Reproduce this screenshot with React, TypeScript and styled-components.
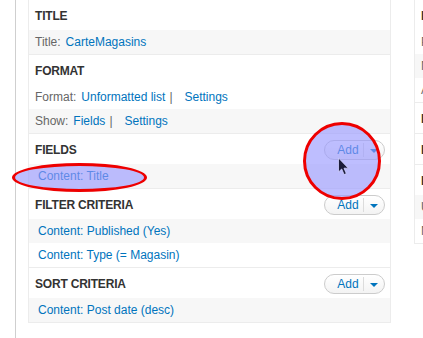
import React from "react";
import styled, {createGlobalStyle} from "styled-components";

const GlobalStyle = createGlobalStyle`
    html, body {
        margin: 0;
        padding: 0;
        background: #fff;
        font-family: "Liberation Sans", Arial, sans-serif;
        font-size: 12px;
        color: #333;
        overflow: hidden;
    }
`;

interface Row {
    label?: string;
    links: string[];
}

interface Section {
    title: string;
    add?: boolean;
    firstGray?: boolean;
    rows: Row[];
}

const mainSections: Section[] = [
    {title: 'Title', firstGray: true, rows: [{label: 'Title:', links: ['CarteMagasins']}]},
    {title: 'Format', firstGray: false, rows: [
        {label: 'Format:', links: ['Unformatted list', 'Settings']},
        {label: 'Show:', links: ['Fields', 'Settings']},
    ]},
    {title: 'Fields', add: true, firstGray: true, rows: [{links: ['Content: Title']}]},
    {title: 'Filter criteria', add: true, firstGray: true, rows: [
        {links: ['Content: Published (Yes)']},
        {links: ['Content: Type (= Magasin)']},
    ]},
    {title: 'Sort criteria', add: true, firstGray: true, rows: [{links: ['Content: Post date (desc)']}]},
];

const sideSections: Section[] = [
    {title: 'Page settings', firstGray: false, rows: [
        {label: 'Path:', links: ['/carte-magasins']},
        {label: 'Menu:', links: ['No menu']},
        {label: 'Access:', links: ['Permission']},
    ]},
    {title: 'Header', add: true, rows: []},
    {title: 'Footer', add: true, rows: []},
    {title: 'Pager', firstGray: true, rows: [
        {label: 'Use pager:', links: ['Display all items']},
        {label: 'More link:', links: ['No']},
    ]},
];

const AddButton = () => (
    <AddPill>
        <AddLabel>Add</AddLabel>
        <AddArrow/>
    </AddPill>
);

const SectionBlock = ({section}: {section: Section}) => (
    <SectionBox>
        <Header>
            <HeaderTitle>{section.title}</HeaderTitle>
            {section.add && <AddButton/>}
        </Header>
        {section.rows.map((row, i) => (
            <DataRow key={i} gray={section.firstGray ? i % 2 === 0 : i % 2 === 1}>
                {row.label ? (
                    <>
                        <Label>{row.label}</Label>
                        {row.links.map((l, j) => (
                            <React.Fragment key={j}>
                                <Link>{l}</Link>
                                {j < row.links.length - 1 && <Pipe>|</Pipe>}
                            </React.Fragment>
                        ))}
                    </>
                ) : (
                    <FieldLink>{row.links[0]}</FieldLink>
                )}
            </DataRow>
        ))}
    </SectionBox>
);

const App = () => {
    return (
        <>
            <GlobalStyle/>
            <Page>
                <Columns>
                    <MainColumn>
                        {mainSections.map((s) => (
                            <SectionBlock key={s.title} section={s}/>
                        ))}
                    </MainColumn>
                    <SideColumn>
                        {sideSections.map((s) => (
                            <SectionBlock key={s.title} section={s}/>
                        ))}
                    </SideColumn>
                </Columns>
                {/* annotation overlays, page starts at x = 16 */}
                <Highlight style={{left: -4, top: 163, width: 129, height: 23}}/>
                <Highlight style={{left: 287, top: 122, width: 72, height: 72}}/>
                <Cursor viewBox="0 0 12 19" width="13" height="19">
                    <path d="M1 1 L1 15 L4.2 12 L6.6 17.6 L8.8 16.6 L6.5 11.2 L10.8 11.2 Z"
                          fill="#1b1b3a" stroke="#d0d0ff" strokeWidth="0.8" strokeLinejoin="round"/>
                </Cursor>
            </Page>
        </>
    );
};

export default App;

const Page = styled.div`
    position: relative;
    height: 338px;
    margin-left: 15px;
    border-left: 1px solid #cfcfcf;
    padding-left: 12px;
`;

const Columns = styled.div`
    display: flex;
    gap: 23px;
    align-items: flex-start;
`;

const MainColumn = styled.div`
    width: 361px;
    flex-shrink: 0;
    border: 1px solid #ececec;
    border-top: none;
`;

const SideColumn = styled.div`
    width: 200px;
    flex-shrink: 0;
    border: 1px solid #ececec;
    border-top: none;
`;

const SectionBox = styled.div`
    border-bottom: 1px solid #ececec;
    &:last-child {
        border-bottom: none;
    }
`;

const Header = styled.div`
    height: 30px;
    display: flex;
    align-items: center;
    justify-content: space-between;
    padding: 2px 5px 0 6px;
    box-sizing: border-box;
`;

const HeaderTitle = styled.div`
    font-weight: bold;
    font-size: 12px;
    text-transform: uppercase;
    color: #333;
    white-space: nowrap;
    letter-spacing: -0.2px;
`;

const DataRow = styled.div<{gray: boolean}>`
    height: 24px;
    display: flex;
    align-items: center;
    padding: 0 6px;
    background: ${({gray}) => (gray ? '#f7f7f7' : '#fff')};
    white-space: nowrap;
`;

const Label = styled.span`
    color: #666;
    margin-right: 5px;
`;

const Link = styled.span`
    color: #0074bd;
`;

const FieldLink = styled.span`
    color: #0074bd;
    padding-left: 3px;
`;

const Pipe = styled.span`
    color: #666;
    margin: 0 12px 0 4px;
`;

const AddPill = styled.div`
    display: flex;
    align-items: center;
    height: 20px;
    width: 61px;
    box-sizing: border-box;
    border: 1px solid #cccccc;
    border-radius: 10px;
    background: linear-gradient(#ffffff, #f3f3f3);
    margin-top: -1px;
`;

const AddLabel = styled.span`
    flex: 1;
    text-align: center;
    color: #0074bd;
    font-size: 12px;
    padding-left: 8px;
    border-right: 1px solid #dcdcdc;
    line-height: 14px;
`;

const AddArrow = styled.span`
    width: 0;
    height: 0;
    margin: 2px 6px 0 6px;
    border-left: 4px solid transparent;
    border-right: 4px solid transparent;
    border-top: 4px solid #0074bd;
`;

const Highlight = styled.div`
    position: absolute;
    border: 3px solid #ee0000;
    border-radius: 50%;
    background: rgba(150, 150, 255, 0.62);
    pointer-events: none;
`;

const Cursor = styled.svg`
    position: absolute;
    left: 321px;
    top: 157px;
`;
